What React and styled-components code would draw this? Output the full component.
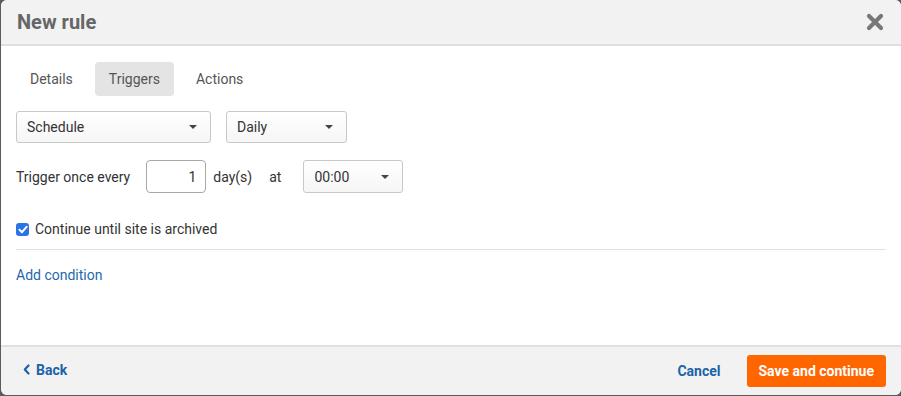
import React from "react";
import styled, { createGlobalStyle } from "styled-components";

const Global = createGlobalStyle`
  html, body { margin: 0; padding: 0; background: #5b5b5b; }
  body { font-family: Roboto, "Liberation Sans", Arial, sans-serif; }
  * { box-sizing: border-box; }
`;

const Dialog = styled.div`
  margin-left: 1px;
  width: 900px;
  height: 395px;
  background: #fff;
  border-radius: 6px;
  overflow: hidden;
  display: flex;
  flex-direction: column;
`;

const Header = styled.header`
  height: 46px;
  flex: none;
  background: #f2f2f2;
  border-bottom: 2px solid #dfdfdf;
  display: flex;
  align-items: center;
  justify-content: space-between;
  padding: 0 17px 1px 16px;
`;

const Title = styled.h1`
  margin: 0;
  font-size: 20px;
  font-weight: 700;
  color: #666;
`;

const Close = styled.button`
  border: 0;
  background: none;
  padding: 0;
  width: 18px;
  height: 18px;
  display: flex;
  cursor: pointer;
`;

const Body = styled.main`
  flex: 1;
  padding: 16px 15px 0 15px;
  display: flex;
  flex-direction: column;
`;

const Tabs = styled.nav`
  display: flex;
  gap: 8px;
`;

const Tab = styled.div`
  height: 34px;
  padding: 0 14px;
  display: flex;
  align-items: center;
  border-radius: 4px;
  font-size: 14px;
  color: #555;
  background: ${(p) => (p.$active ? "#e4e4e4" : "transparent")};
`;

const Row = styled.div`
  display: flex;
  align-items: center;
  margin-top: ${(p) => p.$mt}px;
`;

const Select = styled.div`
  width: ${(p) => p.$w}px;
  height: ${(p) => p.$h || 32}px;
  margin-left: ${(p) => p.$ml || 0}px;
  border: 1px solid #c8c8c8;
  border-radius: 3px;
  background: linear-gradient(#fff, #f6f6f6);
  display: flex;
  align-items: center;
  justify-content: space-between;
  padding: 0 13px 0 10px;
  font-size: 14px;
  color: #333;
`;

const Caret = styled.span`
  width: 0;
  height: 0;
  border-left: 4px solid transparent;
  border-right: 4px solid transparent;
  border-top: 4px solid #444;
`;

const Label = styled.span`
  font-size: 14px;
  color: #333;
  margin-left: ${(p) => p.$ml || 0}px;
`;

const NumberInput = styled.div`
  width: 60px;
  height: 33px;
  margin-left: 16px;
  border: 1px solid #a8a8a8;
  border-radius: 4px;
  display: flex;
  align-items: center;
  justify-content: flex-end;
  padding-right: 9px;
  font-size: 14px;
  color: #333;
`;

const Check = styled.span`
  width: 13px;
  height: 13px;
  border-radius: 3px;
  background: #2b74e6;
  display: flex;
  align-items: center;
  justify-content: center;
`;

const Divider = styled.hr`
  margin: 12px 0 0;
  border: 0;
  border-top: 1px solid #e2e2e2;
`;

const Link = styled.a`
  font-size: 14px;
  color: #1f68ad;
  text-decoration: none;
  margin-top: 17px;
`;

const Footer = styled.footer`
  height: 50px;
  flex: none;
  background: #f2f2f2;
  border-top: 2px solid #e0e0e0;
  display: flex;
  align-items: center;
  padding: 0 15px 0 22px;
`;

const TextButton = styled.a`
  font-size: 14px;
  font-weight: 700;
  color: #1b62aa;
  text-decoration: none;
  display: flex;
  align-items: center;
  gap: 6px;
  margin-top: ${(p) => p.$mt || 0}px;
  margin-left: ${(p) => (p.$push ? "auto" : "0")};
`;

const Primary = styled.button`
  margin-left: 26px;
  height: 32px;
  padding: 0 12px;
  border: 0;
  border-radius: 3px;
  background: #ff6600;
  color: #fff;
  font-family: inherit;
  font-size: 14px;
  font-weight: 700;
`;

export default function App() {
  return (
    <>
      <Global />
      <Dialog>
        <Header>
          <Title>New rule</Title>
          <Close aria-label="Close">
            <svg width="18" height="18" viewBox="0 0 18 18">
              <path d="M3 3 L15 15 M15 3 L3 15" stroke="#777" strokeWidth="4.2" strokeLinecap="round" />
            </svg>
          </Close>
        </Header>
        <Body>
          <Tabs>
            <Tab>Details</Tab>
            <Tab $active>Triggers</Tab>
            <Tab>Actions</Tab>
          </Tabs>
          <Row $mt={15}>
            <Select $w={195}>
              Schedule
              <Caret />
            </Select>
            <Select $w={121} $ml={15}>
              Daily
              <Caret />
            </Select>
          </Row>
          <Row $mt={17}>
            <Label>Trigger once every</Label>
            <NumberInput>1</NumberInput>
            <Label $ml={7}>day(s)</Label>
            <Label $ml={17}>at</Label>
            <Select $w={100} $h={33} $ml={22}>
              00:00
              <Caret />
            </Select>
          </Row>
          <Row $mt={28}>
            <Check>
              <svg width="10" height="9" viewBox="0 0 10 9">
                <path d="M1.5 4.8 L4 7.2 L8.6 1.8" stroke="#fff" strokeWidth="2" fill="none" strokeLinecap="round" strokeLinejoin="round" />
              </svg>
            </Check>
            <Label $ml={6}>Continue until site is archived</Label>
          </Row>
          <Divider />
          <Link href="#">Add condition</Link>
        </Body>
        <Footer>
          <TextButton href="#" $mt={-3}>
            <svg width="7" height="11" viewBox="0 0 7 11">
              <path d="M5.5 1.5 L1.8 5.5 L5.5 9.5" stroke="#1b62aa" strokeWidth="2.2" fill="none" strokeLinecap="round" strokeLinejoin="round" />
            </svg>
            Back
          </TextButton>
          <TextButton href="#" $push>Cancel</TextButton>
          <Primary>Save and continue</Primary>
        </Footer>
      </Dialog>
    </>
  );
}
